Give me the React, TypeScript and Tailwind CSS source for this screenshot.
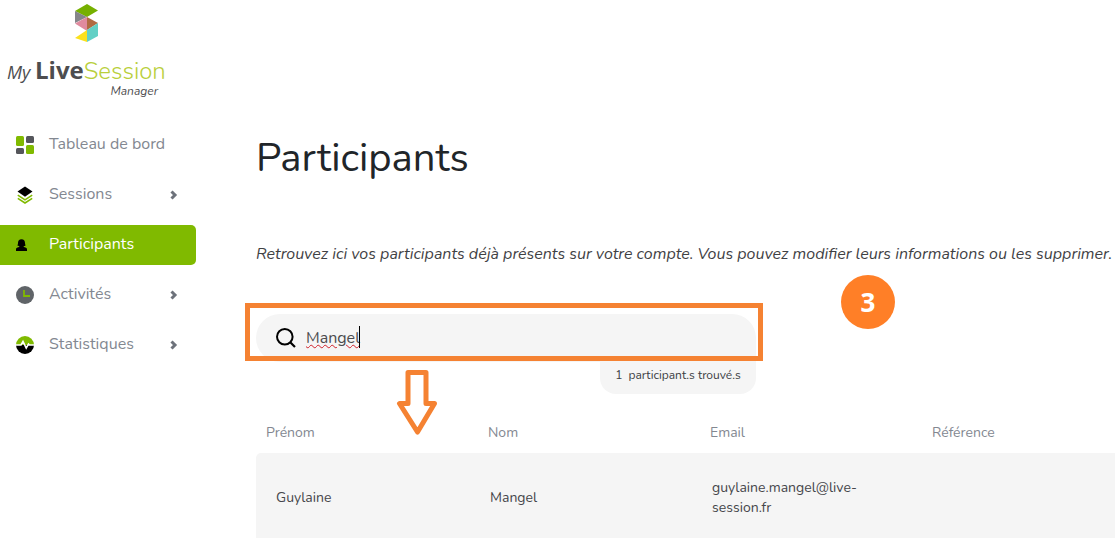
import React from 'react';

interface NavItem {
  label: string;
  icon: React.ReactNode;
  active?: boolean;
  expandable?: boolean;
}

interface Participant {
  firstName: string;
  lastName: string;
  email: string;
  reference: string;
}

const DashboardIcon = () => (
  <svg viewBox="0 0 18 18" className="size-[18px]">
    <rect x="0" y="0" width="8" height="10" rx="1.5" fill="#80ba00" />
    <rect x="10" y="0" width="8" height="7" rx="1.5" fill="#55565b" />
    <rect x="0" y="12" width="8" height="6" rx="1.5" fill="#55565b" />
    <rect x="10" y="9" width="8" height="9" rx="1.5" fill="#80ba00" />
  </svg>
);

const SessionsIcon = () => (
  <svg viewBox="0 0 18 18" className="size-[18px]">
    <path d="M9 0.5 16.5 5.5 9 10.8 1.5 5.5z" fill="#000" />
    <path d="M1.8 9.2 9 13.8l7.2-4.6M1.8 12.4 9 17l7.2-4.6" fill="none" stroke="#80ba00" strokeWidth="1.6" />
  </svg>
);

const ParticipantsIcon = () => (
  <svg viewBox="0 0 18 18" className="size-[18px]">
    <path
      d="M5.5 3.2C7.8 3.2 9 4.8 9 7c0 1.2.5 1.8.5 2.3 0 .6-1.2.8-1.8.9v.9c1.7.5 3.3.8 3.3 2.1V15H0v-1.8c0-1.3 1.6-1.6 3.3-2.1v-.9c-.6-.1-1.8-.3-1.8-.9C1.5 8.800 2 8.200 2 7c0-2.200 1.200-3.800 3.500-3.800z"
      fill="#000"
    />
  </svg>
);

const ActivitiesIcon = () => (
  <svg viewBox="0 0 18 18" className="size-[18px]">
    <circle cx="9" cy="9" r="9" fill="#606468" />
    <path d="M8 4v6h6" fill="none" stroke="#80ba00" strokeWidth="1.8" />
  </svg>
);

const StatsIcon = () => (
  <svg viewBox="0 0 18 18" className="size-[18px]">
    <path d="M0 9a9 9 0 0 1 18 0z" fill="#80ba00" />
    <path d="M0 9a9 9 0 0 0 18 0z" fill="#000" />
    <path d="M0 9h5l2-3.5 3.2 6.5L12.5 8l1 1H18" fill="none" stroke="#fff" strokeWidth="1.6" />
  </svg>
);

const Chevron = () => (
  <svg viewBox="0 0 8 10" className="ml-auto h-[10px] w-2">
    <path d="M1.5 1.5 5 5 1.5 8.500" fill="none" stroke="#6d727b" strokeWidth="3" />
  </svg>
);

const navItems: NavItem[] = [
  { label: 'Tableau de bord', icon: <DashboardIcon /> },
  { label: 'Sessions', icon: <SessionsIcon />, expandable: true },
  { label: 'Participants', icon: <ParticipantsIcon />, active: true },
  { label: 'Activités', icon: <ActivitiesIcon />, expandable: true },
  { label: 'Statistiques', icon: <StatsIcon />, expandable: true },
];

const participants: Participant[] = [
  { firstName: 'Guylaine', lastName: 'Mangel', email: 'guylaine.mangel@live-session.fr', reference: '' },
];

const Logo = () => (
  <a href="#" className="flex w-[172px] flex-col pl-[7px] pt-1">
    <svg viewBox="0 0 24 38" className="ml-[68px] h-[38px] w-6">
      <path d="M12 0 23 6.500 12 13 0 7z" fill="#76b000" />
      <path d="M0 7l12 6-12 6z" fill="#85858a" />
      <path d="M12 13v14L0 19.500z" fill="#e08a9e" />
      <path d="M12 13l11 6-11 7z" fill="#b06b42" />
      <path d="M12 26l11-7v13l-11 6z" fill="#62d0c5" />
      <path d="M12 26v12L0 34z" fill="#fbe11c" />
    </svg>
    <span className="mt-4 flex h-6 items-baseline leading-6">
      <span className="w-7 font-['Open_Sans',sans-serif] text-lg leading-6 italic text-[#4d4d4f]">My</span>
      <span className="font-['Open_Sans',sans-serif] text-2xl leading-6 font-bold text-[#4d4d4f]">Live</span>
      <span className="font-['Nunito',sans-serif] text-2xl leading-6 font-light text-[#b9cf3c]">Session</span>
    </span>
    <span className="self-end pr-[14px] font-['Nunito',sans-serif] text-xs leading-[18px] italic text-[#4d4d4f]">Manager</span>
  </a>
);

const Sidebar = () => (
  <aside className="w-[196px] shrink-0">
    <Logo />
    <nav className="mt-[25px] flex flex-col gap-[10px]">
      {navItems.map((item) => (
        <a
          key={item.label}
          href="#"
          className={`flex h-10 items-center rounded-r-[5px] pl-4 pr-[18px] text-base ${
            item.active ? 'bg-[#80ba00] text-white' : 'text-[#838891]'
          }`}
        >
          {item.icon}
          <span className="ml-[15px] pb-[2px]">{item.label}</span>
          {item.expandable && <Chevron />}
        </a>
      ))}
    </nav>
  </aside>
);

const SearchBox = () => (
  <div className="relative mt-12 w-[500px]">
    <label className="flex h-12 items-center rounded-t-3xl rounded-bl-3xl bg-[#f5f5f5] pl-5">
      <svg viewBox="0 0 20 20" className="size-5">
        <circle cx="8.8" cy="8.8" r="7.8" fill="none" stroke="#000" strokeWidth="2" />
        <path d="M14.5 14.5 19 19" stroke="#000" strokeWidth="2.2" />
      </svg>
      <span className="relative ml-[10px] flex">
        <input
          type="text"
          aria-label="Rechercher un participant"
          defaultValue="Mangel"
          spellCheck={false}
          className="w-[420px] bg-transparent text-base text-[#4b4b4d] underline decoration-[#d0202a] decoration-wavy decoration-1 underline-offset-1 outline-none"
        />
        <span className="absolute left-[53px] top-0 h-[22px] w-px bg-black" />
      </span>
    </label>
    <p className="ml-auto flex h-8 w-[156px] items-center justify-center gap-[6px] rounded-b-2xl bg-[#f5f5f5] pb-[6px] text-xs text-[#3c4043]">
      <span>1</span>
      <span>participant.s trouvé.s</span>
    </p>

    {/* tutorial annotations, drawn over the page */}
    <div className="absolute -left-[11px] -top-[11px] h-[58px] w-[518px] border-5 border-[#f58232]" />
    <svg viewBox="0 0 42 66" className="absolute left-[140px] top-[55px] h-[66px] w-[42px]">
      <path d="M12 3.5h18v31h8.500L21.500 63 3.500 34.500h8.500z" fill="#fff" stroke="#f58232" strokeWidth="5" strokeLinejoin="round" />
    </svg>
    <div className="absolute -top-[39px] left-[585px] flex size-[54px] items-center justify-center rounded-full bg-[#ff7f27] font-['Open_Sans',sans-serif] text-[26px] font-bold text-white">
      3
    </div>
  </div>
);

const ParticipantTable = () => (
  <table className="mt-[29px] w-full table-fixed border-separate border-spacing-0 text-left text-sm leading-5">
    <colgroup>
      <col className="w-[222px]" />
      <col className="w-[222px]" />
      <col className="w-[222px]" />
      <col />
    </colgroup>
    <thead>
      <tr className="h-[30px] align-top text-[#838891]">
        <th className="pl-[10px] font-normal">Prénom</th>
        <th className="pl-[10px] font-normal">Nom</th>
        <th className="pl-[10px] font-normal">Email</th>
        <th className="pl-[10px] font-normal">Référence</th>
      </tr>
    </thead>
    <tbody>
      {participants.map((p) => (
        <tr key={p.email} className="h-[90px] bg-[#f5f5f5] text-[#45464a]">
          <td className="rounded-l-[5px] pl-5">{p.firstName}</td>
          <td className="pl-3">{p.lastName}</td>
          <td className="pl-3 pr-10">{p.email}</td>
          <td className="pl-3">{p.reference}</td>
        </tr>
      ))}
    </tbody>
  </table>
);

export default function App() {
  return (
    <div className="flex min-h-screen overflow-hidden bg-white font-['Nunito','Open_Sans',sans-serif]">
      <Sidebar />
      <main className="min-w-0 flex-1 pl-[60px] pt-[130px]">
        <h1 className="text-[40px] leading-[56px] font-normal text-[#212529]">Participants</h1>
        <p className="mt-14 text-base leading-6 whitespace-nowrap italic text-[#3f4144]">
          Retrouvez ici vos participants déjà présents sur votre compte. Vous pouvez modifier leurs informations ou les supprimer.
        </p>
        <SearchBox />
        <ParticipantTable />
      </main>
    </div>
  );
}
